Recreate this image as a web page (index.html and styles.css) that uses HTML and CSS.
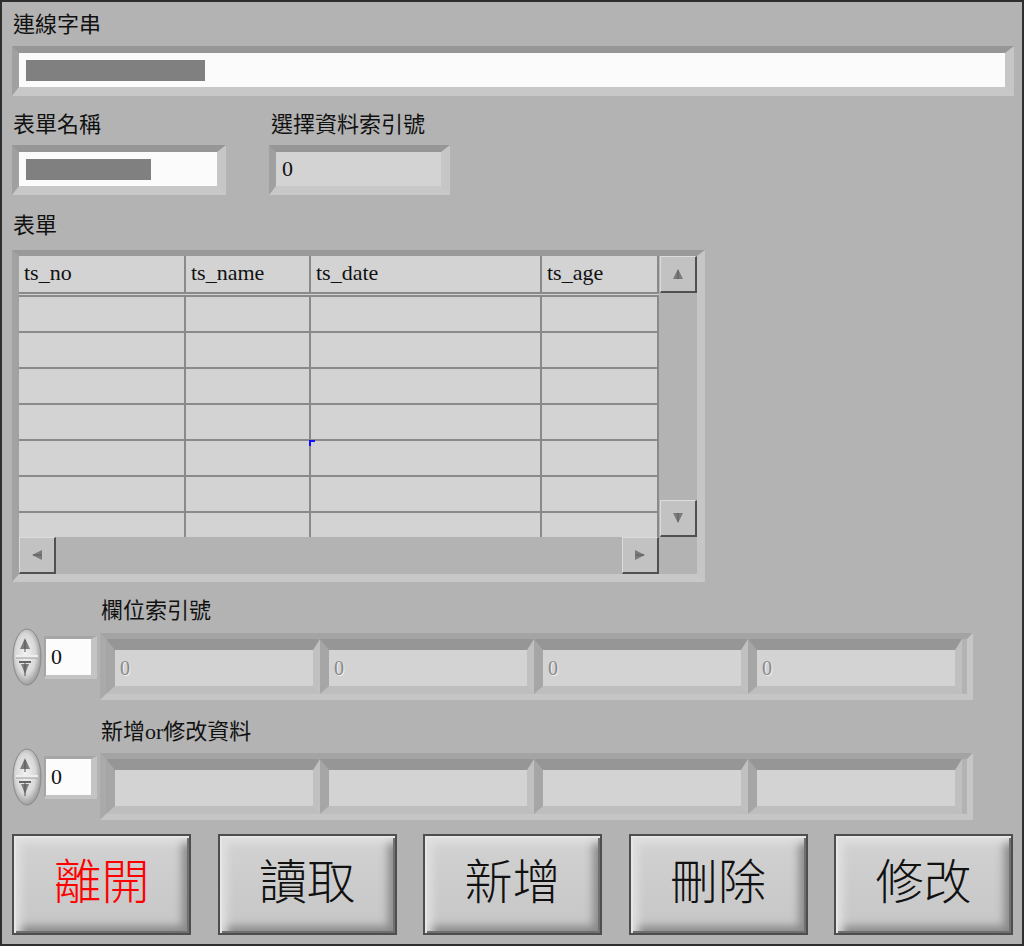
FILE: index.html
```html
<!DOCTYPE html>
<html lang="zh-Hant">
<head>
    <meta charset="UTF-8">
    <title>表單資料</title>
    <link rel="stylesheet" href="styles.css">
</head>
<body>
    <div class="panel">
        <div class="label">連線字串</div>
        <div class="field field-wide">
            <div class="field-inner white"><span class="redact redact-long"></span></div>
        </div>

        <div class="row-two">
            <div class="group">
                <div class="label">表單名稱</div>
                <div class="field field-name">
                    <div class="field-inner white"><span class="redact redact-short"></span></div>
                </div>
            </div>
            <div class="group group-index">
                <div class="label">選擇資料索引號</div>
                <div class="field field-index">
                    <div class="field-inner gray">0</div>
                </div>
            </div>
        </div>

        <div class="label label-table">表單</div>
        <div class="table-frame">
            <div class="table-inner">
                <div class="cells">
                    <div class="trow head">
                        <div class="cell c1">ts_no</div>
                        <div class="cell c2">ts_name</div>
                        <div class="cell c3">ts_date</div>
                        <div class="cell c4">ts_age</div>
                    </div>
                    <div class="trow"><div class="cell c1"></div><div class="cell c2"></div><div class="cell c3"></div><div class="cell c4"></div></div>
                    <div class="trow"><div class="cell c1"></div><div class="cell c2"></div><div class="cell c3"></div><div class="cell c4"></div></div>
                    <div class="trow"><div class="cell c1"></div><div class="cell c2"></div><div class="cell c3"></div><div class="cell c4"></div></div>
                    <div class="trow"><div class="cell c1"></div><div class="cell c2"></div><div class="cell c3"></div><div class="cell c4"></div></div>
                    <div class="trow"><div class="cell c1"></div><div class="cell c2"></div><div class="cell c3"><span class="cursor-mark"></span></div><div class="cell c4"></div></div>
                    <div class="trow"><div class="cell c1"></div><div class="cell c2"></div><div class="cell c3"></div><div class="cell c4"></div></div>
                    <div class="trow"><div class="cell c1"></div><div class="cell c2"></div><div class="cell c3"></div><div class="cell c4"></div></div>
                </div>
                <div class="vscroll">
                    <div class="sbtn">
                        <svg width="14" height="14" viewBox="0 0 14 14"><polygon points="7,2 2,12 12,12" fill="#7a7a7a"/><line x1="7" y1="3" x2="7" y2="12" stroke="#5e5e5e" stroke-width="1"/></svg>
                    </div>
                    <div class="vtrack"></div>
                    <div class="sbtn">
                        <svg width="14" height="14" viewBox="0 0 14 14"><polygon points="2,2 12,2 7,12" fill="#7a7a7a"/><line x1="7" y1="2" x2="7" y2="11" stroke="#5e5e5e" stroke-width="1"/></svg>
                    </div>
                </div>
                <div class="hscroll">
                    <div class="sbtn">
                        <svg width="14" height="14" viewBox="0 0 14 14"><polygon points="2,7 12,2 12,12" fill="#7a7a7a"/><line x1="3" y1="7" x2="12" y2="7" stroke="#5e5e5e" stroke-width="1"/></svg>
                    </div>
                    <div class="htrack"></div>
                    <div class="sbtn">
                        <svg width="14" height="14" viewBox="0 0 14 14"><polygon points="2,2 12,7 2,12" fill="#7a7a7a"/><line x1="2" y1="7" x2="11" y2="7" stroke="#5e5e5e" stroke-width="1"/></svg>
                    </div>
                </div>
                <div class="corner"></div>
            </div>
        </div>

        <div class="label label-array">欄位索引號</div>
        <div class="array-row">
            <div class="index-control">
                <svg class="spinner" width="30" height="58" viewBox="0 0 30 58">
                    <defs>
                        <radialGradient id="spinA" cx="0.45" cy="0.45" r="0.65">
                            <stop offset="0" stop-color="#f2f2f2"/>
                            <stop offset="0.55" stop-color="#d8d8d8"/>
                            <stop offset="1" stop-color="#7e7e7e"/>
                        </radialGradient>
                    </defs>
                    <ellipse cx="15" cy="29" rx="14" ry="28" fill="url(#spinA)" stroke="#8a8a8a"/>
                    <rect x="4" y="27" width="22" height="3" fill="#ededed"/>
                    <line x1="4" y1="30" x2="26" y2="30" stroke="#9a9a9a"/>
                    <polygon points="13,10 8,21 18,21" fill="#7c7c7c"/>
                    <line x1="13" y1="12" x2="13" y2="24" stroke="#555"/>
                    <line x1="7" y1="34" x2="19" y2="34" stroke="#666" stroke-width="2"/>
                    <polygon points="9,36 17,36 13,46" fill="#7c7c7c"/>
                    <line x1="13" y1="35" x2="13" y2="48" stroke="#555"/>
                </svg>
                <div class="numeric"><div class="numeric-inner">0</div></div>
            </div>
            <div class="array">
                <div class="element"><div class="element-inner">0</div></div>
                <div class="element"><div class="element-inner">0</div></div>
                <div class="element"><div class="element-inner">0</div></div>
                <div class="element"><div class="element-inner">0</div></div>
            </div>
        </div>

        <div class="label label-array label-second">新增or修改資料</div>
        <div class="array-row array-row-second">
            <div class="index-control">
                <svg class="spinner" width="30" height="58" viewBox="0 0 30 58">
                    <defs>
                        <radialGradient id="spinB" cx="0.45" cy="0.45" r="0.65">
                            <stop offset="0" stop-color="#f2f2f2"/>
                            <stop offset="0.55" stop-color="#d8d8d8"/>
                            <stop offset="1" stop-color="#7e7e7e"/>
                        </radialGradient>
                    </defs>
                    <ellipse cx="15" cy="29" rx="14" ry="28" fill="url(#spinB)" stroke="#8a8a8a"/>
                    <rect x="4" y="27" width="22" height="3" fill="#ededed"/>
                    <line x1="4" y1="30" x2="26" y2="30" stroke="#9a9a9a"/>
                    <polygon points="13,10 8,21 18,21" fill="#7c7c7c"/>
                    <line x1="13" y1="12" x2="13" y2="24" stroke="#555"/>
                    <line x1="7" y1="34" x2="19" y2="34" stroke="#666" stroke-width="2"/>
                    <polygon points="9,36 17,36 13,46" fill="#7c7c7c"/>
                    <line x1="13" y1="35" x2="13" y2="48" stroke="#555"/>
                </svg>
                <div class="numeric"><div class="numeric-inner">0</div></div>
            </div>
            <div class="array">
                <div class="element"><div class="element-inner"></div></div>
                <div class="element"><div class="element-inner"></div></div>
                <div class="element"><div class="element-inner"></div></div>
                <div class="element"><div class="element-inner"></div></div>
            </div>
        </div>

        <div class="buttons">
            <div class="btn btn-exit">離開</div>
            <div class="btn">讀取</div>
            <div class="btn">新增</div>
            <div class="btn">刪除</div>
            <div class="btn">修改</div>
        </div>
    </div>
</body>
</html>
```

FILE: styles.css
```css
body {
    margin: 0;
    font-family: "Liberation Serif", "Noto Sans CJK TC", serif;
    color: #111;
}
.panel {
    width: 1024px;
    height: 946px;
    box-sizing: border-box;
    border: 2px solid #2e2e2e;
    background-color: #b3b3b3;
    padding: 11px 0 0 10px;
}
.label {
    height: 24px;
    line-height: 24px;
    font-size: 22px;
    padding-left: 1px;
    white-space: nowrap;
}

/* recessed frames */
.field {
    border-style: solid;
    border-width: 7px 9px 9px 7px;
    border-color: #969696 #c6c6c6 #c8c8c8 #a0a0a0;
    margin-top: 9px;
}
.field-inner {
    height: 34px;
    display: flex;
    align-items: center;
    padding-left: 7px;
    font-size: 22px;
}
.white {
    background-color: #fbfbfb;
}
.gray {
    background-color: #d3d3d3;
    padding-left: 6px;
}
.field-wide {
    width: 986px;
}
.redact {
    display: block;
    height: 21px;
    background-color: #808080;
}
.redact-long {
    width: 179px;
}
.redact-short {
    width: 125px;
}
.row-two {
    display: flex;
    margin-top: 17px;
}
.row-two .field {
    margin-top: 8px;
}
.field-name {
    width: 198px;
}
.group-index {
    margin-left: 43px;
}
.group-index .label {
    padding-left: 2px;
}
.field-index {
    width: 165px;
}

/* table */
.label-table {
    margin-top: 19px;
}
.table-frame {
    margin-top: 12px;
    width: 678px;
    border-style: solid;
    border-width: 6px 8px 8px 7px;
    border-color: #999 #c6c6c6 #c8c8c8 #a2a2a2;
}
.table-inner {
    display: grid;
    grid-template-columns: 640px 38px;
    grid-template-rows: 281px 37px;
}
.cells {
    overflow: hidden;
    background-color: #d3d3d3;
}
.trow {
    display: flex;
    height: 34px;
    border-bottom: 2px solid #8a8a8a;
}
.trow.head {
    height: 36px;
    border-bottom: 5px double #8a8a8a;
    font-size: 22px;
    line-height: 34px;
}
.cell {
    position: relative;
    box-sizing: border-box;
    border-right: 2px solid #8a8a8a;
    padding-left: 5px;
    white-space: nowrap;
}
.c1 { width: 167px; }
.c2 { width: 125px; }
.c3 { width: 231px; }
.c4 { width: 117px; }
.cursor-mark {
    position: absolute;
    left: -2px;
    top: -1px;
    width: 6px;
    height: 6px;
    border-top: 2px solid #1010ff;
    border-left: 2px solid #1010ff;
    box-sizing: border-box;
}
.vscroll {
    display: flex;
    flex-direction: column;
    padding-left: 1px;
}
.vtrack {
    flex: 1;
}
.hscroll {
    display: flex;
}
.htrack {
    flex: 1;
}
.sbtn {
    width: 37px;
    height: 37px;
    box-sizing: border-box;
    background-color: #c2c2c2;
    border-style: solid;
    border-width: 1px 2px 2px 1px;
    border-color: #dcdcdc #505050 #505050 #dcdcdc;
    display: flex;
    align-items: center;
    justify-content: center;
}

/* arrays */
.label-array {
    margin-top: 17px;
    padding-left: 0;
    margin-left: 89px;
}
.label-second {
    margin-top: 20px;
}
.array-row {
    display: flex;
    align-items: flex-start;
    margin-top: 5px;
}
.array-row-second {
    margin-top: 4px;
}
.index-control {
    width: 88px;
    display: flex;
    align-items: flex-start;
}
.spinner {
    display: block;
}
.numeric {
    margin-left: 2px;
    margin-top: 8px;
    border-style: solid;
    border-width: 3px 6px 4px 2px;
    border-color: #a6a6a6 #c4c4c4 #c4c4c4 #a6a6a6;
}
.numeric-inner {
    width: 45px;
    height: 36px;
    box-sizing: border-box;
    padding-left: 5px;
    background-color: #fcfcfc;
    font-size: 22px;
    line-height: 36px;
}
.array {
    margin-top: 5px;
    display: flex;
    border-style: solid;
    border-width: 6px;
    border-color: #a4a4a4 #c6c6c6 #c6c6c6 #aaaaaa;
    padding-right: 5px;
}
.element {
    border-style: solid;
    border-width: 11px 7px 8px 9px;
    border-color: #969696 #c0c0c0 #bebebe #a6a6a6;
}
.element-inner {
    width: 198px;
    height: 36px;
    background-color: #d3d3d3;
    box-sizing: border-box;
    padding-left: 5px;
    font-size: 20px;
    line-height: 36px;
    color: #8a8a8a;
    text-shadow: 1px 1px 0 #efefef;
}

/* buttons */
.buttons {
    display: flex;
    justify-content: space-between;
    width: 1001px;
    margin-top: 14px;
}
.btn {
    width: 179px;
    height: 101px;
    box-sizing: border-box;
    border: 2px solid #4e4e4e;
    padding-bottom: 14px;
    background: linear-gradient(#d2d2d2, #c6c6c6);
    box-shadow: inset 2px 2px 0 #e6e6e6, inset -2px -2px 0 #707070, inset 9px 9px 8px -2px #e0e0e0, inset -9px -9px 8px -2px #8a8a8a;
    display: flex;
    align-items: center;
    justify-content: center;
    font-family: "Noto Sans CJK TC", sans-serif;
    font-size: 48px;
    font-weight: 300;
    color: #111;
}
.btn-exit {
    color: #ff0000;
}
```
